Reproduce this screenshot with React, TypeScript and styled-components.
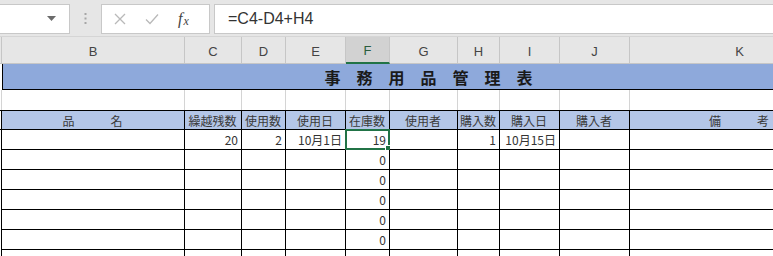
import React from 'react';
import styled, { createGlobalStyle } from 'styled-components';

const COLS = [2, 183, 57, 44, 60, 44, 68, 42, 60, 70, 220];
const TEMPLATE = COLS.map((w) => `${w}px`).join(' ');
const LETTERS = ['', 'B', 'C', 'D', 'E', 'F', 'G', 'H', 'I', 'J', 'K'];
const HEADINGS = ['', '品　　　名', '繰越残数', '使用数', '使用日', '在庫数', '使用者', '購入数', '購入日', '購入者', '備　　　考'];

const GREEN = '#217346';
const CELL_FONT = '"Noto Sans CJK JP", "Noto Sans", sans-serif';

const GlobalStyle = createGlobalStyle`
  html, body {
    margin: 0;
    padding: 0;
    background: #ffffff;
    overflow: hidden;
  }
  body {
    width: 773px;
    height: 256px;
  }
`;

const Sheet = styled.div`
  width: 773px;
  height: 256px;
  overflow: hidden;
  font-family: ${CELL_FONT};
`;

const FormulaBar = styled.div`
  display: flex;
  align-items: center;
  height: 37px;
  box-sizing: border-box;
  padding: 4px 0 3px;
  background: #e6e6e6;
  border-bottom: 1px solid #d5d5d5;
`;

const NameBox = styled.div`
  width: 70px;
  height: 30px;
  box-sizing: border-box;
  background: #ffffff;
  border: 1px solid #c8c8c8;
  border-left: none;
  display: flex;
  align-items: center;
  justify-content: flex-end;
  padding-right: 13px;
`;

const Grip = styled.div`
  width: 31px;
  display: flex;
  justify-content: center;
`;

const ButtonsBox = styled.div`
  width: 109px;
  height: 30px;
  box-sizing: border-box;
  background: #ffffff;
  border: 1px solid #c8c8c8;
  display: flex;
  align-items: center;
  padding-left: 11px;
  gap: 17px;
`;

const FxMark = styled.span`
  font-family: "Liberation Serif", serif;
  font-style: italic;
  font-size: 16px;
  color: #444;
  margin-left: 1px;

  small {
    font-size: 12px;
    margin-left: 1px;
    position: relative;
    top: 1px;
  }
`;

const FormulaInput = styled.div`
  flex: 1;
  margin-left: 4px;
  height: 30px;
  box-sizing: border-box;
  background: #ffffff;
  border: 1px solid #c8c8c8;
  border-right: none;
  display: flex;
  align-items: center;
  padding-left: 13px;
  font-family: "Liberation Sans", Arial, sans-serif;
  font-size: 16px;
  color: #333;
`;

const Row = styled.div<{ h: number }>`
  display: grid;
  grid-template-columns: ${TEMPLATE};
  height: ${({ h }) => h}px;
`;

const ColumnHead = styled.div<{ active?: boolean }>`
  box-sizing: border-box;
  height: 27px;
  background: ${({ active }) => (active ? '#d2d2d2' : '#e6e6e6')};
  border-right: 1px solid #c6c6c6;
  border-bottom: ${({ active }) => (active ? `2px solid ${GREEN}` : '1px solid #c6c6c6')};
  display: flex;
  align-items: center;
  justify-content: center;
  padding-top: 2px;
  font-family: "Liberation Sans", Arial, sans-serif;
  font-size: 13px;
  color: ${({ active }) => (active ? '#2b5d3d' : '#444')};
`;

const TitleRow = styled.div`
  display: flex;
  height: 26px;
  width: 850px;
  box-sizing: border-box;
  margin-left: 2px;
  background: #8ea9db;
  border-left: 1px solid #000;
  border-bottom: 1px solid #000;
  align-items: center;
  justify-content: center;
`;

const Title = styled.span`
  font-size: 16px;
  font-weight: bold;
  color: #1a1a1a;
  padding-left: 2px;
`;

const GridCell = styled.div`
  box-sizing: border-box;
  border-right: 1px solid #d4d4d4;
`;

const Cell = styled.div<{ head?: boolean; align?: 'left' | 'center' | 'right' }>`
  position: relative;
  box-sizing: border-box;
  background: ${({ head }) => (head ? '#b4c6e7' : '#ffffff')};
  border-top: ${({ head }) => (head ? '1px solid #000' : 'none')};
  border-right: 1px solid #000;
  border-bottom: 1px solid #000;
  display: flex;
  align-items: center;
  justify-content: ${({ align }) => (align === 'right' ? 'flex-end' : align === 'left' ? 'flex-start' : 'center')};
  padding: 0 3px 0 2px;
  font-size: 12px;
  color: ${({ head }) => (head ? '#3a3a3a' : '#333')};
  white-space: nowrap;
`;

const Edge = styled.div<{ top?: boolean }>`
  box-sizing: border-box;
  border-right: 1px solid #000;
  ${({ top }) => (top ? 'border-top: 1px solid #000; border-bottom: 1px solid #000;' : '')}
`;

const Selection = styled.div`
  position: absolute;
  left: -1px;
  top: -1px;
  right: -1px;
  bottom: -1px;
  border: 2px solid ${GREEN};
  pointer-events: none;
`;

const FillHandle = styled.div`
  position: absolute;
  right: -4px;
  bottom: -4px;
  width: 5px;
  height: 5px;
  background: ${GREEN};
  border: 1px solid #fff;
`;

type Line = (string | number)[];

const rows: Line[] = [
  ['', 20, 2, '10月1日', 19, '', 1, '10月15日', '', ''],
  ['', '', '', '', 0, '', '', '', '', ''],
  ['', '', '', '', 0, '', '', '', '', ''],
  ['', '', '', '', 0, '', '', '', '', ''],
  ['', '', '', '', 0, '', '', '', '', ''],
  ['', '', '', '', 0, '', '', '', '', ''],
  ['', '', '', '', '', '', '', '', '', ''],
];

const Cancel = () => (
  <svg width="14" height="14" viewBox="0 0 14 14">
    <path d="M2 2 L12 12 M12 2 L2 12" stroke="#b9b9b9" strokeWidth="1.3" fill="none" />
  </svg>
);

const Enter = () => (
  <svg width="16" height="14" viewBox="0 0 16 14">
    <path d="M2 7.5 L6 11.5 L14 2.5" stroke="#b9b9b9" strokeWidth="1.3" fill="none" />
  </svg>
);

const Arrow = () => (
  <svg width="9" height="5" viewBox="0 0 9 5">
    <path d="M0 0 H9 L4.5 5 Z" fill="#6b6b6b" />
  </svg>
);

const Dots = () => (
  <svg width="3" height="11" viewBox="0 0 3 11">
    <rect x="0.5" y="0" width="2" height="2" fill="#a6a6a6" />
    <rect x="0.5" y="4.5" width="2" height="2" fill="#a6a6a6" />
    <rect x="0.5" y="9" width="2" height="2" fill="#a6a6a6" />
  </svg>
);

export default function App() {
  return (
    <>
      <GlobalStyle />
      <Sheet>
        <FormulaBar>
          <NameBox>
            <Arrow />
          </NameBox>
          <Grip>
            <Dots />
          </Grip>
          <ButtonsBox>
            <Cancel />
            <Enter />
            <FxMark>
              f<small>x</small>
            </FxMark>
          </ButtonsBox>
          <FormulaInput>=C4-D4+H4</FormulaInput>
        </FormulaBar>

        <Row h={27}>
          {LETTERS.map((l, i) => (
            <ColumnHead key={i} active={l === 'F'}>
              {l}
            </ColumnHead>
          ))}
        </Row>

        <TitleRow>
          <Title>事　務　用　品　管　理　表</Title>
        </TitleRow>

        <Row h={20}>
          {COLS.map((_, i) => (
            <GridCell key={i} />
          ))}
        </Row>

        <Row h={20}>
          <Edge top />
          {HEADINGS.slice(1).map((t, i) => (
            <Cell key={i} head>
              {t}
            </Cell>
          ))}
        </Row>

        {rows.map((line, r) => (
          <Row h={20} key={r}>
            <Edge />
            {line.map((v, c) => (
              <Cell key={c} align="right">
                {v}
                {r === 0 && c === 4 && (
                  <Selection>
                    <FillHandle />
                  </Selection>
                )}
              </Cell>
            ))}
          </Row>
        ))}
      </Sheet>
    </>
  );
}
